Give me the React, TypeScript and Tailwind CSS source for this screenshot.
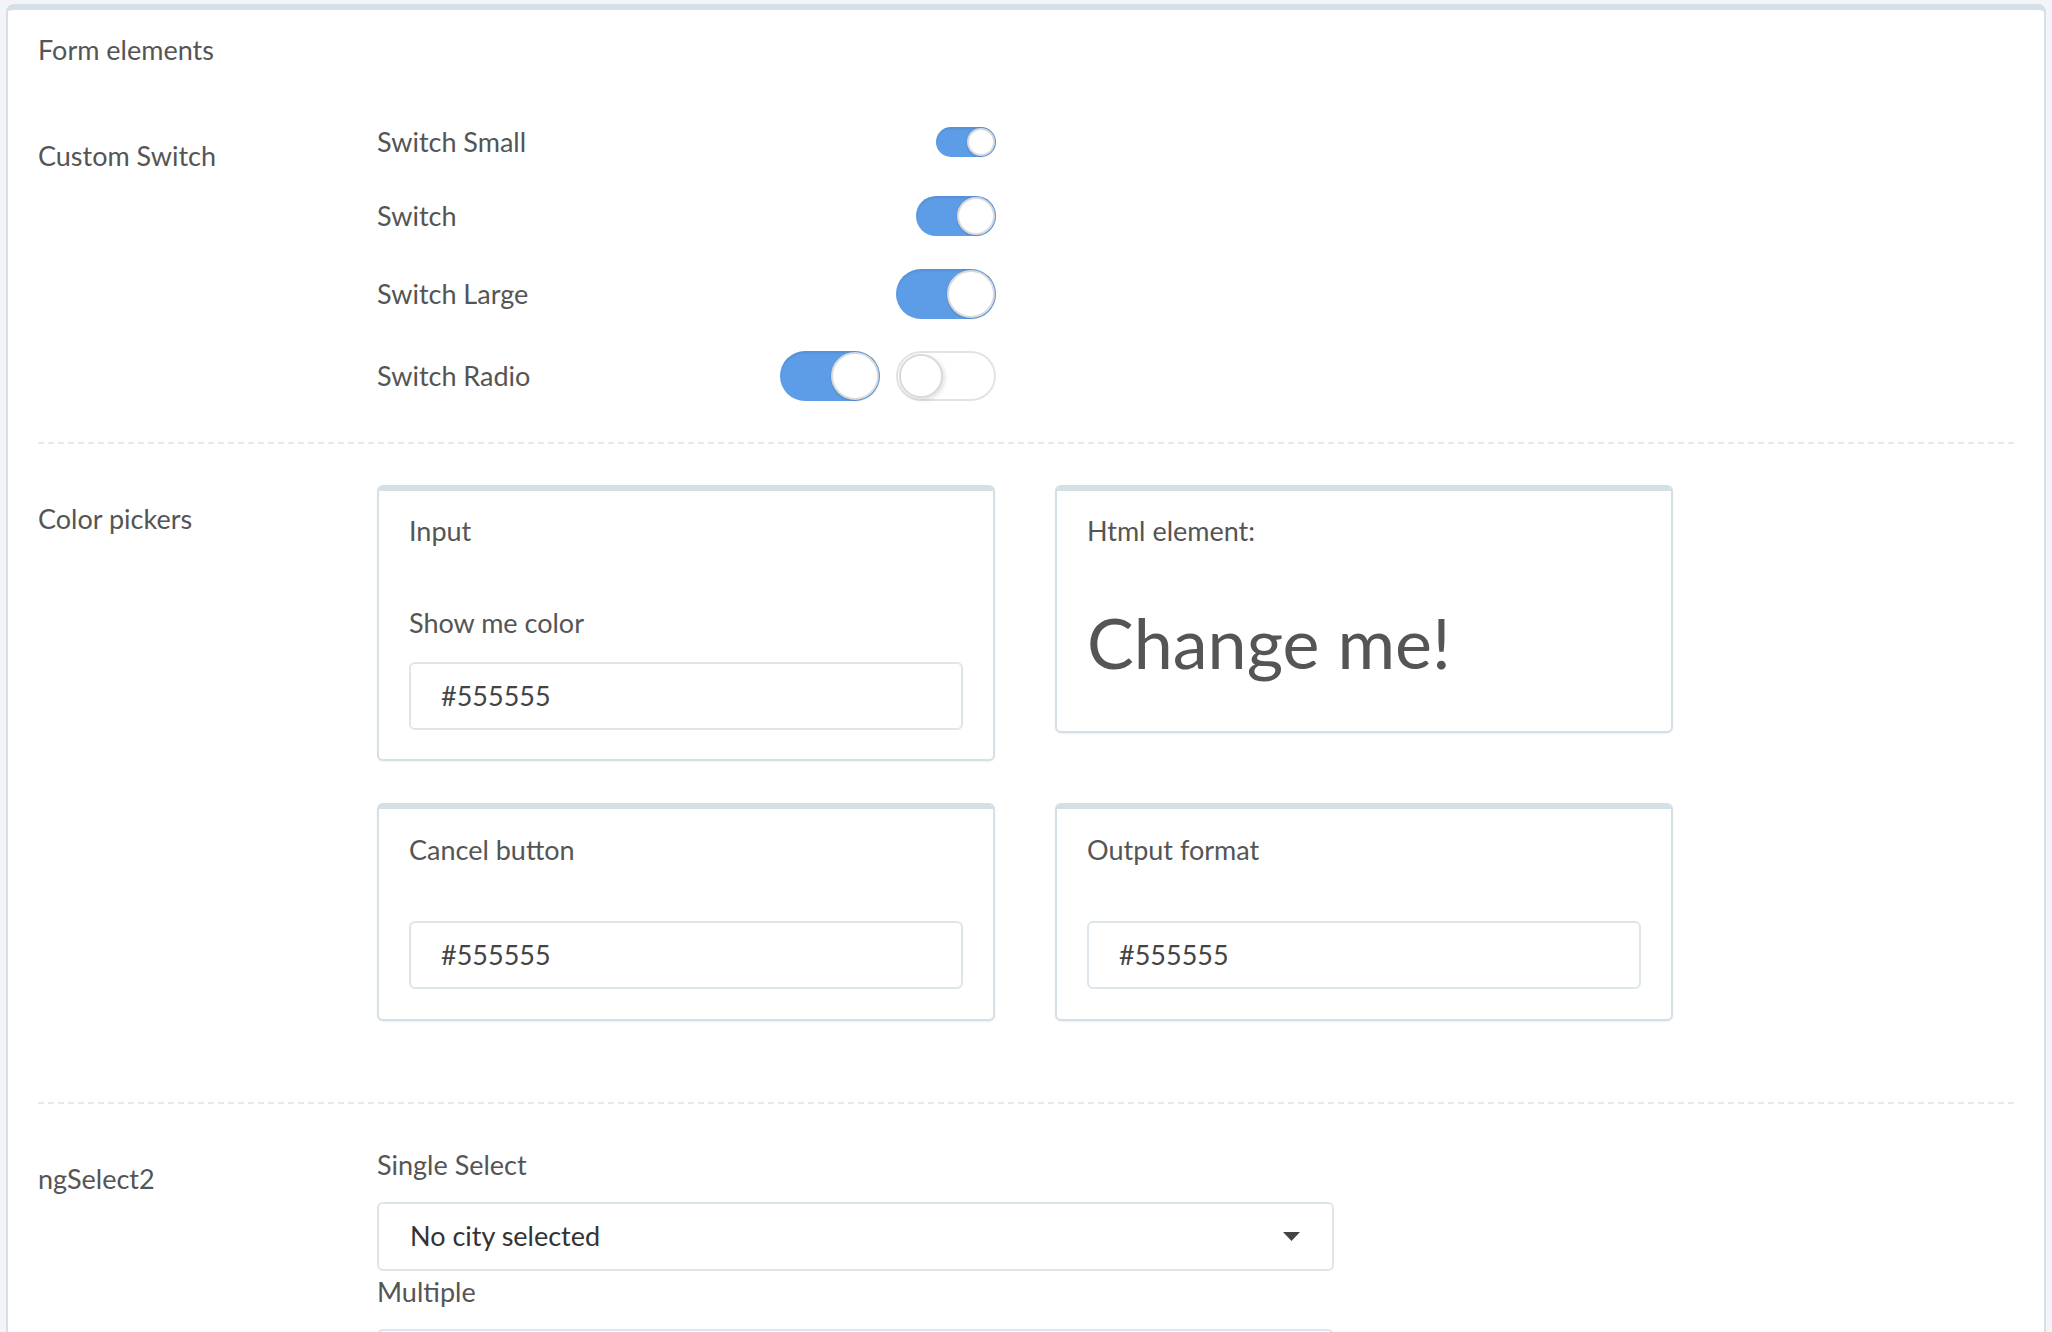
import React from "react";

const font = { fontFamily: "Lato, 'Noto Sans', sans-serif" };

function Toggle({ w, h, on = true }: { w: string; h: string; on?: boolean }) {
  return (
    <div
      className={`${w} ${h} flex shrink-0 items-center rounded-full p-[1px] ${
        on
          ? "justify-end bg-[#5d9ce6] shadow-[inset_0_2px_2px_rgba(0,0,0,0.08)]"
          : "justify-start border-2 border-[#e3e3e3] bg-white p-0"
      }`}
    >
      <div
        className={`aspect-square h-full rounded-full border-2 border-[#dadada] bg-white ${
          on ? "shadow-[0_1px_2px_rgba(0,0,0,0.15)]" : "shadow-[2px_2px_4px_rgba(0,0,0,0.12)]"
        }`}
      />
    </div>
  );
}

function SwitchRow({ label, children, className = "" }: { label: string; children: React.ReactNode; className?: string }) {
  return (
    <div className={`flex items-center justify-between ${className}`}>
      <span className="text-[27px] leading-[36px] text-[#555]">{label}</span>
      <div className="flex items-center gap-[16px]">{children}</div>
    </div>
  );
}

function Panel({ children, className = "" }: { children: React.ReactNode; className?: string }) {
  return (
    <div
      className={`rounded-[6px] border-2 border-t-[6px] border-[#d5dfe6] bg-white px-[30px] shadow-[0_1px_2px_rgba(0,0,0,0.06)] ${className}`}
    >
      {children}
    </div>
  );
}

function ColorInput() {
  return (
    <div className="flex h-[68px] items-center rounded-[6px] border-2 border-[#dde6ea] bg-white pl-[30px] text-[27px] text-[#444]">
      #555555
    </div>
  );
}

function Divider({ className = "" }: { className?: string }) {
  return <div className={`border-t-2 border-dashed border-[#e7eaed] ${className}`} />;
}

export default function App() {
  return (
    <div className="min-h-screen bg-[#f2f4f7] px-[6px] pt-[4px]" style={font}>
      <div className="min-h-[1400px] rounded-t-[8px] border-2 border-t-[6px] border-[#d5dfe6] bg-white px-[30px] pt-[22px]">
        <h2 className="text-[27px] leading-[36px] text-[#555]">Form elements</h2>

        <section className="mt-[56px] flex">
          <div className="w-[339px] shrink-0 pt-[14px] text-[27px] leading-[36px] text-[#555]">Custom Switch</div>
          <div className="w-[619px]">
            <SwitchRow label="Switch Small">
              <Toggle w="w-[60px]" h="h-[30px]" />
            </SwitchRow>
            <SwitchRow label="Switch" className="mt-[36px]">
              <Toggle w="w-[80px]" h="h-[40px]" />
            </SwitchRow>
            <SwitchRow label="Switch Large" className="mt-[33px]">
              <Toggle w="w-[100px]" h="h-[50px]" />
            </SwitchRow>
            <SwitchRow label="Switch Radio" className="mt-[32px]">
              <Toggle w="w-[100px]" h="h-[50px]" />
              <Toggle w="w-[100px]" h="h-[50px]" on={false} />
            </SwitchRow>
          </div>
        </section>

        <Divider className="mt-[41px]" />

        <section className="mt-[41px] flex">
          <div className="w-[339px] shrink-0 pt-[16px] text-[27px] leading-[36px] text-[#555]">Color pickers</div>
          <div className="grid grid-cols-[618px_618px] items-start gap-x-[60px] gap-y-[42px]">
            <Panel className="pt-[22px] pb-[29px]">
              <div className="text-[27px] leading-[36px] text-[#555]">Input</div>
              <div className="mt-[56px] text-[27px] leading-[36px] text-[#555]">Show me color</div>
              <div className="mt-[21px]">
                <ColorInput />
              </div>
            </Panel>
            <Panel className="pt-[22px] pb-[46px]">
              <div className="text-[27px] leading-[36px] text-[#555]">Html element:</div>
              <div className="mt-[50px] text-[70px] leading-[86px] text-[#555]">Change me!</div>
            </Panel>
            <Panel className="pt-[23px] pb-[30px]">
              <div className="text-[27px] leading-[36px] text-[#555]">Cancel button</div>
              <div className="mt-[53px]">
                <ColorInput />
              </div>
            </Panel>
            <Panel className="pt-[23px] pb-[30px]">
              <div className="text-[27px] leading-[36px] text-[#555]">Output format</div>
              <div className="mt-[53px]">
                <ColorInput />
              </div>
            </Panel>
          </div>
        </section>

        <Divider className="mt-[81px]" />

        <section className="mt-[43px] flex">
          <div className="w-[339px] shrink-0 pt-[14px] text-[27px] leading-[36px] text-[#555]">ngSelect2</div>
          <div className="w-[957px]">
            <div className="text-[27px] leading-[36px] text-[#555]">Single Select</div>
            <div className="mt-[19px] flex h-[69px] items-center justify-between rounded-[6px] border-2 border-[#dde6ea] bg-white pl-[31px] pr-[32px] text-[27px] text-[#333]">
              <span>No city selected</span>
              <svg width="17" height="9" viewBox="0 0 17 9">
                <path d="M0 0h17L8.5 9z" fill="#444" />
              </svg>
            </div>
            <div className="mt-[3px] text-[27px] leading-[36px] text-[#555]">Multiple</div>
            <div className="mt-[19px] h-[69px] rounded-[6px] border-2 border-[#dde6ea] bg-white" />
          </div>
        </section>
      </div>
    </div>
  );
}
